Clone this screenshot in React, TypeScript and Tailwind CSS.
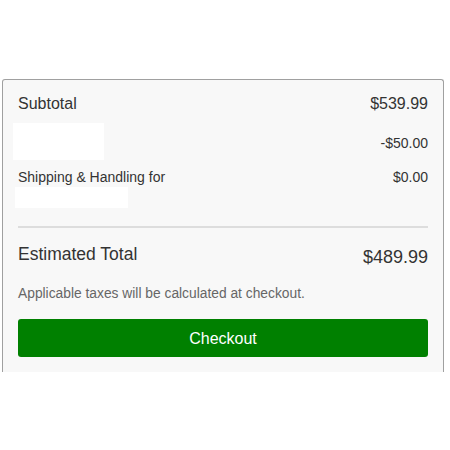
export default function App() {
  return (
    <div className="w-[450px] h-[450px] bg-white pt-[79px] pl-[2px]" style={{ fontFamily: '"Liberation Sans", Arial, sans-serif' }}>
      <div className="w-[442px] h-[293px] overflow-hidden border border-b-0 border-[#a0a0a0] rounded-t-[3px] bg-[#f8f8f8] px-[15px] pt-[13px] text-[#333]">
        <div className="flex justify-between items-center h-[22px] text-[16px] leading-[22px]">
          <span>Subtotal</span>
          <span>$539.99</span>
        </div>
        <div className="flex justify-between items-center h-[37px] mt-[8px] text-[14px]">
          <div className="w-[91px] h-[37px] bg-white -ml-[5px]"></div>
          <span className="mt-[3px]">-$50.00</span>
        </div>
        <div className="flex justify-between items-center h-[16px] mt-[9px] text-[14px] leading-[16px]">
          <span>Shipping &amp; Handling for</span>
          <span>$0.00</span>
        </div>
        <div className="w-[113px] h-[21px] bg-white -ml-[3px] mt-[2px]"></div>
        <div className="h-[2px] bg-[#dddddd] mt-[18px]"></div>
        <div className="flex justify-between items-start mt-[14px] h-[26px]">
          <span className="text-[17.5px] leading-[24px]">Estimated Total</span>
          <span className="text-[18px] leading-[24px] mt-[3px]">$489.99</span>
        </div>
        <div className="mt-[18px] text-[13.8px] leading-[16px] text-[#666]">Applicable taxes will be calculated at checkout.</div>
        <button className="mt-[17px] w-full h-[38px] rounded-[3px] bg-[#008000] text-white text-[16px] flex items-center justify-center pt-[2px]">
          Checkout
        </button>
      </div>
    </div>
  );
}
